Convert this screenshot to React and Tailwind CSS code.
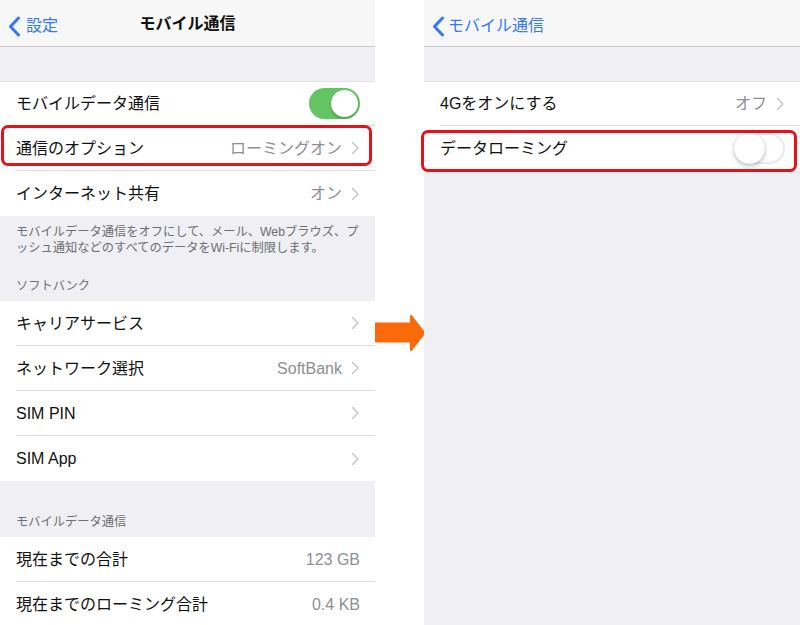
import React from "react";

const FONT = { fontFamily: '"Liberation Sans", "Noto Sans CJK JP", sans-serif' };

function Chevron() {
  return (
    <svg width="9" height="14" viewBox="0 0 9 14" className="ml-[9px] shrink-0">
      <path d="M1.5 1.5 L7 7 L1.5 12.5" fill="none" stroke="#c8c8cc" strokeWidth="1.6" strokeLinecap="round" strokeLinejoin="round" />
    </svg>
  );
}

function BackChevron() {
  return (
    <svg width="13" height="21" viewBox="0 0 13 21" className="shrink-0">
      <path d="M10.5 2 L2.5 10.5 L10.5 19" fill="none" stroke="#3478f6" strokeWidth="3" strokeLinecap="round" strokeLinejoin="round" />
    </svg>
  );
}

function Toggle({ on }) {
  if (on) {
    return (
      <div className="w-[51px] h-[31px] rounded-full bg-[#62c462] relative shrink-0">
        <div className="absolute right-[2px] top-[2px] w-[27px] h-[27px] rounded-full bg-white shadow-[0_2px_3px_rgba(0,0,0,0.2)]" />
      </div>
    );
  }
  return (
    <div className="w-[51px] h-[31px] rounded-full bg-white border-2 border-[#e9e9ea] relative shrink-0">
      <div className="absolute left-[-2px] top-[-2px] w-[31px] h-[31px] rounded-full bg-white shadow-[0_2px_4px_rgba(0,0,0,0.25),0_0_1px_rgba(0,0,0,0.2)]" />
    </div>
  );
}

function Row({ label, value, chevron, toggle, last, h = "h-[45px]", children }) {
  return (
    <div className={`bg-white pl-4 ${h} relative`}>
      <div className={`flex h-full items-center pr-[15px] ${last ? "" : "border-b border-[#dcdce0]"}`}>
        <span className="text-[16px] text-[#111] flex-1 whitespace-nowrap pt-[1px]">{label}</span>
        {value && <span className="text-[16px] text-[#8e8e93] whitespace-nowrap pt-[1px]">{value}</span>}
        {chevron && <Chevron />}
        {toggle !== undefined && <Toggle on={toggle} />}
      </div>
      {children}
    </div>
  );
}

function NavBar({ children }) {
  return (
    <div className="h-[47px] bg-[#f7f7f8] border-b border-[#c8c8cc] flex items-center relative">
      {children}
    </div>
  );
}

export default function App() {
  return (
    <div className="w-[800px] h-[625px] bg-white flex overflow-hidden" style={FONT}>
      {/* Left panel */}
      <div className="w-[375px] h-[625px] shrink-0 bg-[#efeff4] overflow-hidden">
        <NavBar>
          <div className="absolute left-[8px] top-[14px] flex items-center">
            <BackChevron />
            <span className="text-[16px] text-[#3478f6] ml-[5px]">設定</span>
          </div>
          <div className="w-full text-center text-[16px] font-bold text-[#111] pt-[1px]">モバイル通信</div>
        </NavBar>
        <div className="h-[34px]" />
        <div className="border-t border-[#e2e2e6]">
          <Row label="モバイルデータ通信" toggle={true} h="h-[44px]" />
          <Row label="通信のオプション" value="ローミングオン" chevron>
            <div className="absolute left-[1px] top-[-1px] w-[371px] h-[41px] border-[3px] border-[#e8111a] rounded-[7px]" />
          </Row>
          <Row label="インターネット共有" value="オン" chevron last />
        </div>
        <div className="px-4 pt-[8px] pb-[7px] text-[12.25px] leading-[16px] text-[#6d6d72]">
          <div className="whitespace-nowrap">モバイルデータ通信をオフにして、メール、Webブラウズ、プ</div>
          <div className="whitespace-nowrap">ッシュ通知などのすべてのデータをWi-Fiに制限します。</div>
          <div className="mt-[22px]">ソフトバンク</div>
        </div>
        <div>
          <Row label="キャリアサービス" chevron />
          <Row label="ネットワーク選択" value="SoftBank" chevron />
          <Row label="SIM PIN" chevron />
          <Row label="SIM App" chevron last />
        </div>
        <div className="px-4 pt-[33px] pb-[7px] text-[12.25px] leading-[16px] text-[#6d6d72]">
          モバイルデータ通信
        </div>
        <div>
          <Row label="現在までの合計" value="123 GB" />
          <Row label="現在までのローミング合計" value="0.4 KB" last />
        </div>
      </div>

      {/* Middle arrow */}
      <div className="w-[49px] h-[625px] shrink-0">
        <div className="h-[314px]" />
        <svg width="52" height="38" viewBox="0 0 52 38" className="-ml-[1px] overflow-visible block">
          <path d="M2 8.5 L36 8.5 L36 2 Q36 0 38 1.5 L50.5 17.5 Q51.5 19 50.5 20.5 L38 36.5 Q36 38 36 36 L36 28.5 L2 28.5 Q0 28.5 0 26.5 L0 10.5 Q0 8.5 2 8.5 Z" fill="#f96a0b" />
        </svg>
      </div>

      {/* Right panel */}
      <div className="flex-1 h-[625px] bg-[#efeff4] relative">
        <NavBar>
          <div className="absolute left-[8px] top-[14px] flex items-center">
            <BackChevron />
            <span className="text-[16px] text-[#3478f6] ml-[3px]">モバイル通信</span>
          </div>
        </NavBar>
        <div className="h-[34px]" />
        <div className="border-t border-[#e2e2e6]">
          <Row label="4Gをオンにする" value="オフ" chevron h="h-[44px]" />
          <Row label="データローミング" toggle={false} last>
            <div className="absolute left-[-3px] top-[4px] w-[376px] h-[42px] border-[3px] border-[#e8111a] rounded-[7px] z-10" />
          </Row>
        </div>
        <div className="border-t border-[#e2e2e6]" />
      </div>
    </div>
  );
}
